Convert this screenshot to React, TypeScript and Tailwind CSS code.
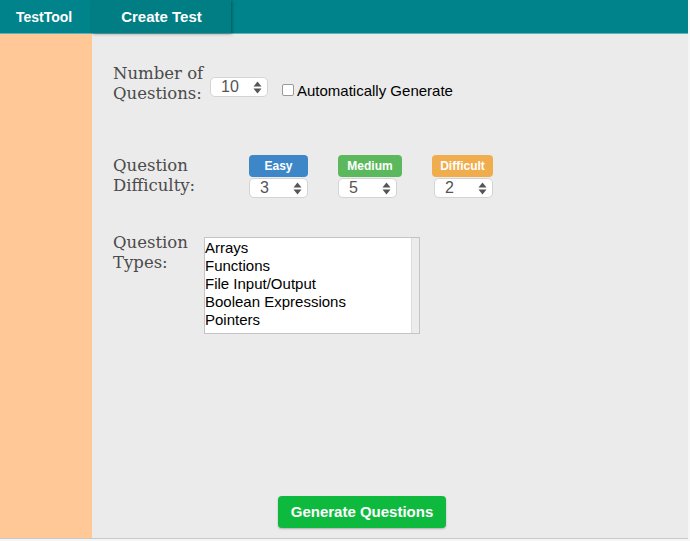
import React from "react";

const Spinner = () => (
    <svg width="9" height="13" viewBox="0 0 9 13" className="shrink-0">
        <path d="M4.5 0.5 L8.5 5.5 L0.5 5.5 Z" fill="#555" />
        <path d="M4.5 12.5 L8.5 7.5 L0.5 7.5 Z" fill="#555" />
    </svg>
);

function NumberBox({ value, width }: { value: string; width: string }) {
    return (
        <div
            className={`${width} h-[20px] bg-white border border-[#d4d4d4] rounded-[5px] flex items-center justify-between pl-[10px] pr-[5px] text-[16px] text-[#555] leading-none`}
        >
            <span>{value}</span>
            <Spinner />
        </div>
    );
}

const labelClass = "text-[16.5px] leading-[20px] text-[#4a4a4a] font-['DejaVu_Serif',serif]";

export default function App() {
    const types = ["Arrays", "Functions", "File Input/Output", "Boolean Expressions", "Pointers"];

    return (
        <div className="w-[690px] h-[541px] bg-[#f6f6f6] font-['Liberation_Sans',Arial,sans-serif]">
            <div className="w-[688px] h-[539px] flex flex-col border-b border-[#c8c8c8]">
                {/* Navbar */}
                <div className="h-[33px] bg-[#00838a] flex items-stretch shrink-0 relative z-10 shadow-[0_1px_0_#5fb3b6]">
                    <div className="w-[92px] flex items-center pl-[16px] pt-[1px] text-white font-bold text-[14px]">
                        TestTool
                    </div>
                    <div className="w-[139px] bg-[#007e84] flex items-center justify-center pt-[1px] text-white font-bold text-[15px] shadow-[1px_1px_3px_rgba(0,0,0,0.35)]">
                        Create Test
                    </div>
                </div>

                <div className="flex flex-1 min-h-0">
                    {/* Sidebar */}
                    <div className="w-[92px] bg-[#ffc896] shrink-0" />

                    {/* Content */}
                    <div className="flex-1 bg-[#ebebeb] flex flex-col pl-[21px] pt-[31px]">
                        {/* Number of questions */}
                        <div className="flex items-start">
                            <div className={`${labelClass} w-[97px]`}>
                                Number of
                                <br />
                                Questions:
                            </div>
                            <div className="mt-[13px]">
                                <NumberBox value="10" width="w-[58px]" />
                            </div>
                            <div className="mt-[20px] ml-[14px] w-[12px] h-[12px] bg-white border border-[#999] rounded-[2px]" />
                            <div className="mt-[18px] ml-[3px] text-[15px] leading-[17px] text-black">
                                Automatically Generate
                            </div>
                        </div>

                        {/* Difficulty */}
                        <div className="flex items-start mt-[52px]">
                            <div className={`${labelClass} w-[136px]`}>
                                Question
                                <br />
                                Difficulty:
                            </div>
                            <div className="flex flex-col w-[59px] -mt-[1px]">
                                <div className="h-[22px] bg-[#3d87c9] rounded-[4px] flex items-center justify-center text-white font-bold text-[12px]">
                                    Easy
                                </div>
                                <div className="mt-[1px]">
                                    <NumberBox value="3" width="w-[59px]" />
                                </div>
                            </div>
                            <div className="flex flex-col w-[64px] ml-[30px] -mt-[1px]">
                                <div className="h-[22px] bg-[#5cb85c] rounded-[4px] flex items-center justify-center text-white font-bold text-[12px]">
                                    Medium
                                </div>
                                <div className="mt-[1px]">
                                    <NumberBox value="5" width="w-[59px]" />
                                </div>
                            </div>
                            <div className="flex flex-col items-end w-[61px] ml-[30px] -mt-[1px]">
                                <div className="w-full h-[22px] bg-[#f0ad4e] rounded-[4px] flex items-center justify-center text-white font-bold text-[12px]">
                                    Difficult
                                </div>
                                <div className="mt-[1px]">
                                    <NumberBox value="2" width="w-[59px]" />
                                </div>
                            </div>
                        </div>

                        {/* Types */}
                        <div className="flex items-start mt-[35px]">
                            <div className={`${labelClass} w-[91px]`}>
                                Question
                                <br />
                                Types:
                            </div>
                            <div className="mt-[4px] w-[216px] h-[97px] bg-white border border-[#c4c4c4] flex">
                                <div className="flex-1 pt-[1px] text-[15px] leading-[18px] text-black">
                                    {types.map((t) => (
                                        <div key={t}>{t}</div>
                                    ))}
                                </div>
                                <div className="w-[8px] bg-[#ececec] border-l border-[#dcdcdc]" />
                            </div>
                        </div>

                        {/* Submit */}
                        <div className="mt-auto mb-[10px] pl-[165px]">
                            <button className="w-[168px] h-[32px] bg-[#0eba3e] rounded-[4px] text-white font-bold text-[15px] shadow-[0_1px_2px_rgba(0,0,0,0.25)]">
                                Generate Questions
                            </button>
                        </div>
                    </div>
                </div>
            </div>
        </div>
    );
}
